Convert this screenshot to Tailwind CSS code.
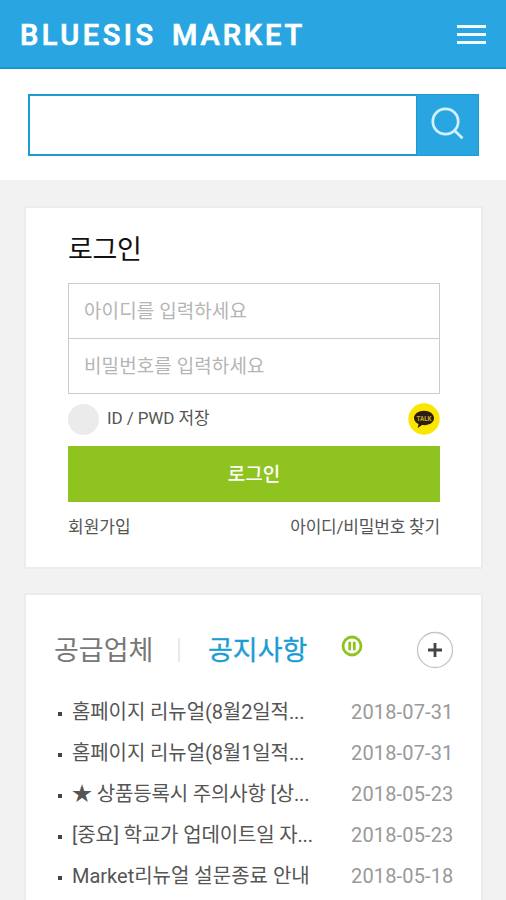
<!DOCTYPE html>
<html lang="ko">
<head>
<meta charset="utf-8">
<meta name="viewport" content="width=device-width, initial-scale=1">
<title>BLUESIS MARKET</title>
<script src="https://cdn.jsdelivr.net/npm/@tailwindcss/browser@4"></script>
</head>
<body class="h-[900px] overflow-hidden bg-[#f2f2f2] font-[Roboto,'Noto_Sans_CJK_KR',sans-serif] text-[#555]">
<header class="flex h-[69px] items-center justify-between border-b-2 border-[#1697cf] bg-[#29a6e1] pl-[20px] pr-[20px]">
  <h1 class="flex pt-[4px] font-[Roboto,sans-serif] text-[29px] leading-none font-medium text-white [-webkit-text-stroke:0.7px_white]">
    <span class="w-[152px] tracking-[3.5px]">BLUESIS</span><span class="tracking-[2.9px]">MARKET</span>
  </h1>
  <button class="mt-[1px] flex w-[29px] flex-col gap-[5px]" aria-label="menu">
    <span class="h-[3px] w-full bg-[#f2fbff]"></span><span class="h-[3px] w-full bg-[#f2fbff]"></span><span class="h-[3px] w-full bg-[#f2fbff]"></span>
  </button>
</header>

<section class="h-[111px] bg-white pt-[25px] pl-[28px]">
  <form class="flex h-[62px] w-[451px]">
    <div class="flex-1 border-2 border-r-0 border-[#1d9bd0]"></div>
    <button type="button" class="flex w-[63px] items-center justify-center border border-[#1d9bd0] bg-[#29a6e1]" aria-label="search">
      <svg class="mb-[2px]" width="34" height="34" viewBox="0 0 34 34" fill="none" stroke="#d3f2ff" stroke-width="2.7"><circle cx="14.500" cy="14.500" r="12.700"/><path d="M23.500 23.500l8 7.700"/></svg>
    </button>
  </form>
</section>

<section class="mt-[26px] ml-[24px] h-[363px] w-[459px] border-2 border-[#ececec] bg-white px-[42px]">
  <h2 class="h-[75px] pt-[23px] text-[27px] leading-[38px] tracking-[-0.4px] text-[#111]">로그인</h2>
  <div class="h-[111px] w-[372px] border border-[#ccc] text-[19px] tracking-[0.1px] text-[#b5b5b5]">
    <div class="flex h-[55px] items-center border-b border-[#ccc] pt-[2px] pl-[15px]">아이디를 입력하세요</div>
    <div class="flex h-[54px] items-center pt-[2px] pl-[15px]">비밀번호를 입력하세요</div>
  </div>
  <div class="flex h-[52px] w-[372px] items-center text-[17px]">
    <span class="mb-[2px] size-[31px] rounded-full bg-[#ebebeb]"></span>
    <span class="mb-[2px] ml-[8px] flex-1 tracking-[-0.1px]">ID / PWD 저장</span>
    <svg class="mb-[2px]" width="32" height="32" viewBox="0 0 32 32"><circle cx="16" cy="16" r="15.7" fill="#fbe600"/><path d="M16 7.800c-5.600 0-10 3.200-10 7.200 0 2.600 1.800 4.800 4.500 6.100L9.700 25l4.400-3c6.800.8 11.900-2.300 11.900-7 0-4-4.400-7.200-10-7.200z" fill="#2e1c10"/><text x="16" y="17.800" text-anchor="middle" font-family="Roboto" font-size="7.500" font-weight="900" textLength="15" lengthAdjust="spacingAndGlyphs" fill="#b5a12a">TALK</text></svg>
  </div>
  <button class="flex h-[56px] w-[372px] items-center justify-center bg-[#8fc31f] pt-[2px] text-[19px] font-medium text-white">로그인</button>
  <div class="flex w-[372px] justify-between pt-[13px] text-[17px] leading-[25px]">
    <a>회원가입</a><a class="tracking-[-0.2px]">아이디/비밀번호 찾기</a>
  </div>
</section>

<section class="mt-[24px] ml-[24px] h-[330px] w-[459px] border-2 border-[#ececec] bg-white pl-[28px]">
  <div class="flex h-[97px] items-center pt-[13px] text-[27px]">
    <span class="w-[124px] pt-[3px] text-[#777]">공급업체</span>
    <span class="h-[24px] w-[2px] bg-[#e9e9e9]"></span>
    <span class="ml-[28px] w-[133px] pt-[3px] text-[#1b9cd3] [-webkit-text-stroke:0.3px_#1b9cd3]">공지사항</span>
    <svg class="mb-[9px]" width="22" height="22" viewBox="0 0 22 22" fill="none" stroke="#8fc31f"><circle cx="11" cy="11" r="9" stroke-width="2.800"/><path d="M8.700 6.700v8.600M13.300 6.700v8.600" stroke-width="2.800"/></svg>
    <svg class="ml-[53px]" width="38" height="38" viewBox="0 0 38 38" fill="none"><circle cx="19" cy="19" r="17.500" stroke="#c5c5c5" stroke-width="1.300"/><path d="M12 19h14M19 12v14" stroke="#444" stroke-width="2.800"/></svg>
  </div>
  <ul class="text-[20px] leading-[41px] text-[#555]">
    <li class="flex h-[41px] items-center"><i class="mt-[2px] ml-[4px] mr-[10px] size-[4px] bg-[#444]"></i><span class="w-[279px] tracking-[-0.1px]">홈페이지 리뉴얼(8월2일적...</span><time class="tracking-[0.15px] text-[#999]">2018-07-31</time></li>
    <li class="flex h-[41px] items-center"><i class="mt-[2px] ml-[4px] mr-[10px] size-[4px] bg-[#444]"></i><span class="w-[279px] tracking-[-0.1px]">홈페이지 리뉴얼(8월1일적...</span><time class="tracking-[0.15px] text-[#999]">2018-07-31</time></li>
    <li class="flex h-[41px] items-center"><i class="mt-[2px] ml-[4px] mr-[10px] size-[4px] bg-[#444]"></i><span class="w-[279px] tracking-[-0.15px]">★ 상품등록시 주의사항 [상...</span><time class="tracking-[0.15px] text-[#999]">2018-05-23</time></li>
    <li class="flex h-[41px] items-center"><i class="mt-[2px] ml-[4px] mr-[10px] size-[4px] bg-[#444]"></i><span class="w-[279px] tracking-[-0.15px]">[중요] 학교가 업데이트일 자...</span><time class="tracking-[0.15px] text-[#999]">2018-05-23</time></li>
    <li class="flex h-[41px] items-center"><i class="mt-[2px] ml-[4px] mr-[10px] size-[4px] bg-[#444]"></i><span class="w-[279px]">Market리뉴얼 설문종료 안내</span><time class="tracking-[0.15px] text-[#999]">2018-05-18</time></li>
  </ul>
</section>
</body>
</html>
